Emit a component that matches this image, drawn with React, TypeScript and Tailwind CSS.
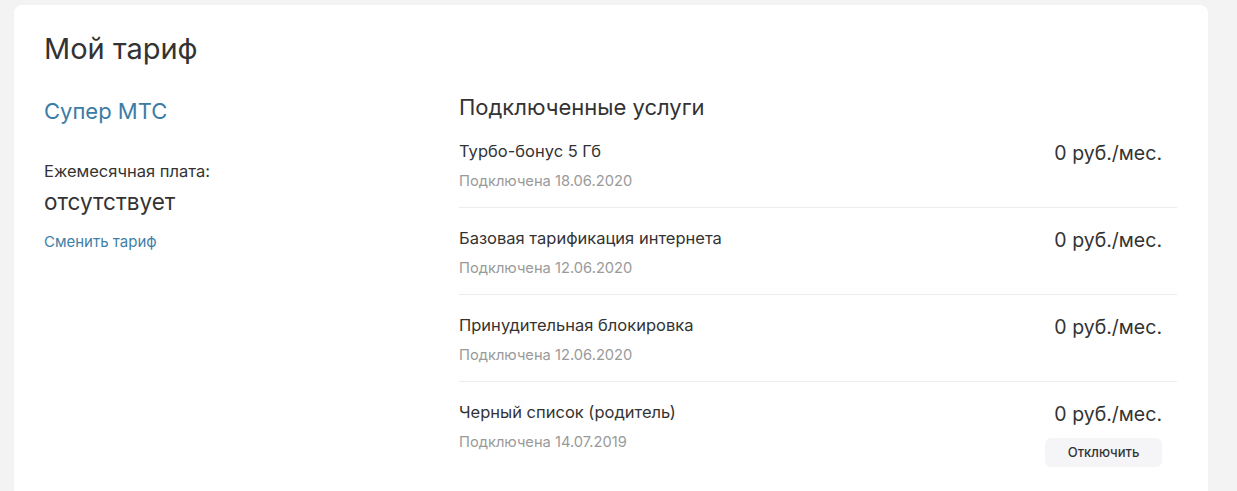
const SERVICES = [
  { name: 'Турбо-бонус 5 Гб', date: '18.06.2020', price: '0 руб./мес.' },
  { name: 'Базовая тарификация интернета', date: '12.06.2020', price: '0 руб./мес.' },
  { name: 'Принудительная блокировка', date: '12.06.2020', price: '0 руб./мес.' },
  { name: 'Черный список (родитель)', date: '14.07.2019', price: '0 руб./мес.', canDisable: true },
];

function ServiceRow({ s, last }: { s: (typeof SERVICES)[number]; last: boolean }) {
  return (
    <div className={`flex justify-between pt-[18px] pb-[16px] ${last ? '' : 'border-b border-[#ececec]'}`}>
      <div>
        <div className="text-[16.5px] leading-[24px] text-[#333]">{s.name}</div>
        <div className="mt-[8px] text-[14.7px] leading-[20px] text-[#9a9a9a]">Подключена {s.date}</div>
      </div>
      <div className="flex flex-col items-end pr-[15px]">
        <div className="text-[19.5px] leading-[28px] text-[#333]">{s.price}</div>
        {s.canDisable && (
          <button className="mt-[10px] w-[117px] h-[29px] rounded-md bg-[#f5f5f7] text-[13px] font-medium text-[#333]">
            Отключить
          </button>
        )}
      </div>
    </div>
  );
}

export default function App() {
  return (
    <div
      className="min-h-[491px] bg-[#f3f3f3] pt-[5px] pl-[14px] pr-[29px]"
      style={{ fontFamily: 'Inter, "Noto Sans", sans-serif' }}
    >
      <div className="bg-white rounded-lg pl-[30px] pt-[26px] pb-[20px] pr-[31px] min-h-[484px]">
        <h1 className="text-[29px] leading-[36px] text-[#333]">Мой тариф</h1>
        <div className="flex mt-[20px]">
          <div className="w-[415px] shrink-0">
            <div className="mt-[10px] text-[22px] leading-[28px] text-[#3a7ca5]">Супер МТС</div>
            <div className="mt-[35px] text-[16.5px] leading-[22px] text-[#333]">Ежемесячная плата:</div>
            <div className="mt-[6px] text-[22.5px] leading-[28px] text-[#333]">отсутствует</div>
            <a className="block mt-[16px] text-[15px] leading-[20px] text-[#3f7fa8]" href="#">
              Сменить тариф
            </a>
          </div>
          <div className="flex-1">
            <div className="mt-[6px] text-[22px] leading-[28px] text-[#333]">Подключенные услуги</div>
            <div>
              {SERVICES.map((s, i) => (
                <ServiceRow key={s.name} s={s} last={i === SERVICES.length - 1} />
              ))}
            </div>
          </div>
        </div>
      </div>
    </div>
  );
}
